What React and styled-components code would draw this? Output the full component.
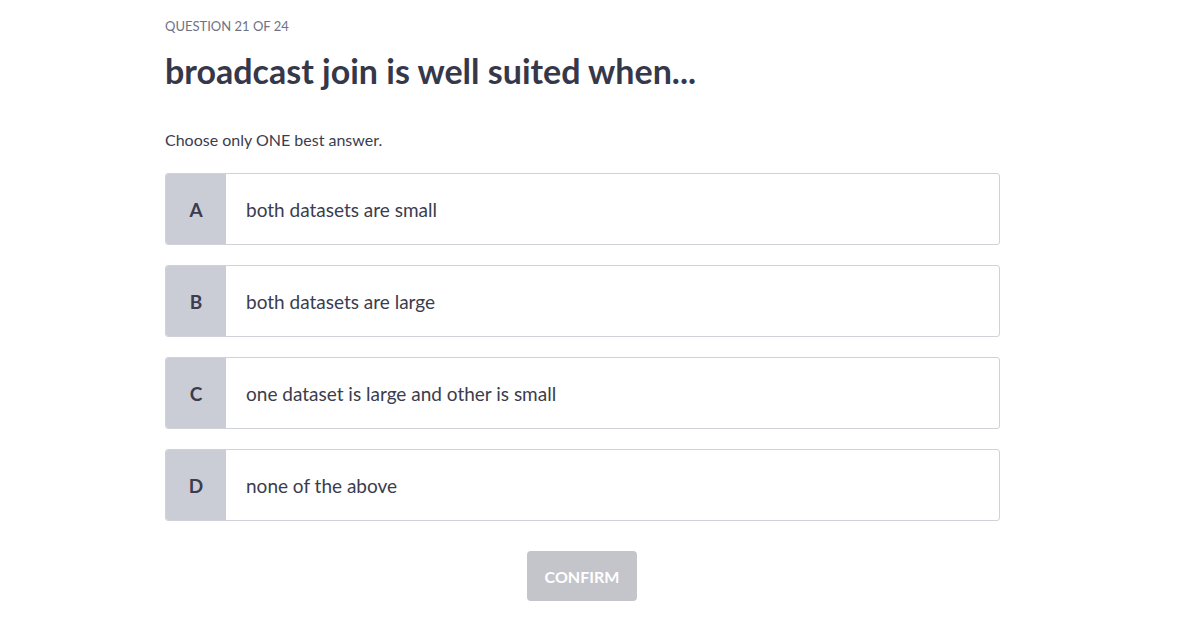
import React from "react";
import styled, { createGlobalStyle } from "styled-components";

const Global = createGlobalStyle`
  html, body { margin: 0; padding: 0; background: #fff; }
  body { font-family: Lato, "Liberation Sans", sans-serif; color: #3b3c4e; }
`;

const Page = styled.main`
  width: 835px;
  margin: 0 0 0 165px;
  padding-top: 17px;
  display: flex;
  flex-direction: column;
`;

const Counter = styled.div`
  font-size: 13px;
  line-height: 18px;
  color: #6d7385;
  text-transform: uppercase;
`;

const Title = styled.h1`
  margin: 15px 0 0;
  font-size: 34px;
  line-height: 42px;
  font-weight: 700;
  color: #363849;
`;

const Hint = styled.p`
  margin: 37px 0 0;
  font-size: 16px;
  line-height: 22px;
  color: #3b3c4e;
`;

const Options = styled.div`
  margin-top: 22px;
  display: flex;
  flex-direction: column;
  gap: 20px;
`;

const Option = styled.button`
  display: flex;
  align-items: stretch;
  height: 72px;
  padding: 0;
  border: 1px solid #d0d1d9;
  border-radius: 3px;
  background: #fff;
  overflow: hidden;
  cursor: pointer;
  font-family: inherit;
  text-align: left;
`;

const Letter = styled.span`
  flex: 0 0 60px;
  display: flex;
  align-items: center;
  justify-content: center;
  background: #cbcdd6;
  font-size: 19px;
  font-weight: 700;
  color: #3b3c4e;
`;

const Answer = styled.span`
  display: flex;
  align-items: center;
  padding-left: 20px;
  font-size: 19px;
  color: #3b3c4e;
`;

const Footer = styled.div`
  display: flex;
  justify-content: center;
  margin-top: 30px;
`;

const Confirm = styled.button`
  width: 110px;
  height: 50px;
  margin-left: -1px;
  border: none;
  border-radius: 4px;
  background: #c4c5cb;
  color: #fff;
  font-family: inherit;
  font-size: 16px;
  font-weight: 700;
  text-transform: uppercase;
`;

const options = [
  ["A", "both datasets are small"],
  ["B", "both datasets are large"],
  ["C", "one dataset is large and other is small"],
  ["D", "none of the above"],
];

export default function App() {
  return (
    <>
      <Global />
      <Page>
        <Counter>Question 21 of 24</Counter>
        <Title>broadcast join is well suited when...</Title>
        <Hint>Choose only ONE best answer.</Hint>
        <Options>
          {options.map(([l, t]) => (
            <Option key={l}>
              <Letter>{l}</Letter>
              <Answer>{t}</Answer>
            </Option>
          ))}
        </Options>
        <Footer>
          <Confirm disabled>Confirm</Confirm>
        </Footer>
      </Page>
    </>
  );
}
